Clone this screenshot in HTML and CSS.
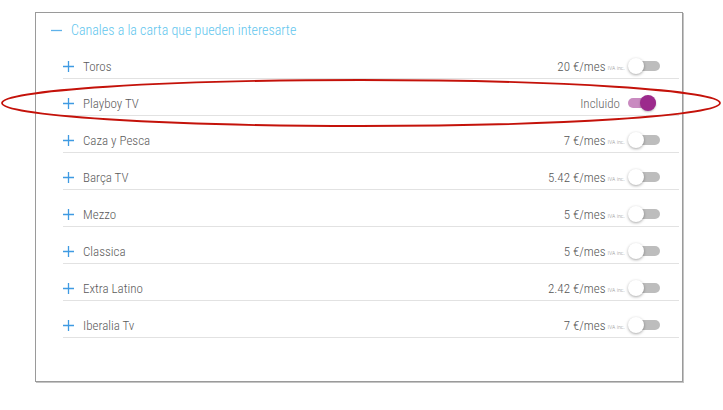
FILE: index.html
```html
<!DOCTYPE html>
<html lang="es">
<head>
    <meta charset="UTF-8">
    <title>Canales a la carta</title>
    <link rel="stylesheet" href="styles.css">
</head>
<body>
    <div class="panel">
        <div class="panel-header">
            <svg class="sign" width="11" height="11" viewBox="0 0 11 11"><path d="M0 5.5H11"/></svg>
            <span>Canales a la carta que pueden interesarte</span>
        </div>
        <ul class="channels">
            <li class="channel">
                <svg class="sign plus" width="11" height="11" viewBox="0 0 11 11"><path d="M0 5.5H11M5.5 0V11"/></svg>
                <span class="name">Toros</span>
                <span class="price">20 €/mes</span><span class="iva">IVA inc.</span>
                <span class="switch"><span class="knob"></span></span>
            </li>
            <li class="channel">
                <svg class="sign plus" width="11" height="11" viewBox="0 0 11 11"><path d="M0 5.5H11M5.5 0V11"/></svg>
                <span class="name">Playboy TV</span>
                <span class="price included">Incluido</span>
                <span class="switch on"><span class="knob"></span></span>
            </li>
            <li class="channel">
                <svg class="sign plus" width="11" height="11" viewBox="0 0 11 11"><path d="M0 5.5H11M5.5 0V11"/></svg>
                <span class="name">Caza y Pesca</span>
                <span class="price">7 €/mes</span><span class="iva">IVA inc.</span>
                <span class="switch"><span class="knob"></span></span>
            </li>
            <li class="channel">
                <svg class="sign plus" width="11" height="11" viewBox="0 0 11 11"><path d="M0 5.5H11M5.5 0V11"/></svg>
                <span class="name">Barça TV</span>
                <span class="price">5.42 €/mes</span><span class="iva">IVA inc.</span>
                <span class="switch"><span class="knob"></span></span>
            </li>
            <li class="channel">
                <svg class="sign plus" width="11" height="11" viewBox="0 0 11 11"><path d="M0 5.5H11M5.5 0V11"/></svg>
                <span class="name">Mezzo</span>
                <span class="price">5 €/mes</span><span class="iva">IVA inc.</span>
                <span class="switch"><span class="knob"></span></span>
            </li>
            <li class="channel">
                <svg class="sign plus" width="11" height="11" viewBox="0 0 11 11"><path d="M0 5.5H11M5.5 0V11"/></svg>
                <span class="name">Classica</span>
                <span class="price">5 €/mes</span><span class="iva">IVA inc.</span>
                <span class="switch"><span class="knob"></span></span>
            </li>
            <li class="channel">
                <svg class="sign plus" width="11" height="11" viewBox="0 0 11 11"><path d="M0 5.5H11M5.5 0V11"/></svg>
                <span class="name">Extra Latino</span>
                <span class="price">2.42 €/mes</span><span class="iva">IVA inc.</span>
                <span class="switch"><span class="knob"></span></span>
            </li>
            <li class="channel">
                <svg class="sign plus" width="11" height="11" viewBox="0 0 11 11"><path d="M0 5.5H11M5.5 0V11"/></svg>
                <span class="name">Iberalia Tv</span>
                <span class="price">7 €/mes</span><span class="iva">IVA inc.</span>
                <span class="switch"><span class="knob"></span></span>
            </li>
        </ul>
    </div>

    <!-- hand-drawn highlight around the included channel -->
    <svg class="highlight" width="723" height="410" viewBox="0 0 723 410">
        <ellipse cx="361" cy="103" rx="359" ry="23"/>
    </svg>
</body>
</html>
```

FILE: styles.css
```css
* {
    box-sizing: border-box;
    margin: 0;
    padding: 0;
}

body {
    position: relative;
    width: 723px;
    height: 410px;
    background-color: #fff;
    font-family: 'Roboto Condensed', 'DejaVu Sans Condensed', sans-serif;
    font-weight: 300;
    color: #5a5a5a;
    overflow: hidden;
}

.panel {
    margin: 12px 0 0 35px;
    width: 648px;
    height: 370px;
    border: 1px solid #9a9a9a;
    box-shadow: 1px 1px 0 #c4c4c4;
}

.panel-header {
    display: flex;
    align-items: center;
    gap: 9px;
    height: 18px;
    margin-top: 8px;
    padding-left: 15px;
    font-size: 14px;
    color: #62c6ee;
}

.sign {
    flex: none;
    stroke: #5fb2ea;
    stroke-width: 1.3;
    fill: none;
}

.plus {
    stroke: #3f9ae2;
}

.channels {
    list-style: none;
    margin: 3px 3px 0 27px;
}

.channel {
    display: flex;
    align-items: center;
    height: 37px;
    padding: 15px 19px 3px 0;
    border-bottom: 1px solid #e2e2e2;
    font-size: 13px;
}

.channel .sign {
    margin-right: 9px;
}

.name {
    flex: 1;
}

.price {
    color: #555;
}

.price.included {
    margin-right: 8px;
    color: #666;
}

.iva {
    margin: 2px 4px 0 2px;
    font-size: 6px;
    color: #9a9a9a;
}

.switch {
    display: flex;
    align-items: center;
    width: 31px;
    height: 10px;
    border-radius: 5px;
    background-color: #bdbdbd;
}

.knob {
    width: 16px;
    height: 16px;
    margin-left: -1px;
    border-radius: 50%;
    background-color: #fff;
    box-shadow: 0 1px 3px rgba(0, 0, 0, 0.35);
}

.switch.on {
    justify-content: flex-end;
    width: 28px;
    margin-right: 4px;
    background-color: #c98ac0;
}

.switch.on .knob {
    margin-left: 0;
    background-color: #9c2a8c;
    box-shadow: 0 1px 2px rgba(0, 0, 0, 0.25);
}

.highlight {
    position: absolute;
    top: 0;
    left: 0;
    pointer-events: none;
}

.highlight ellipse {
    fill: none;
    stroke: #c4120a;
    stroke-width: 1.8;
}
```
